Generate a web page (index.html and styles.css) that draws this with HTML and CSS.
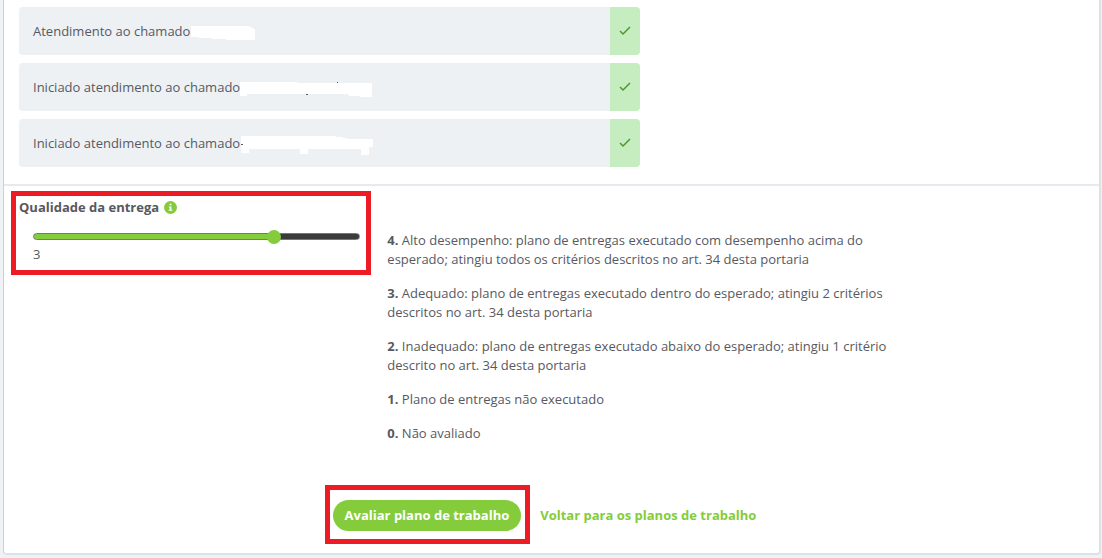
FILE: index.html
```html
<!DOCTYPE html>
<html lang="pt-BR">
<head>
<meta charset="utf-8">
<meta name="viewport" content="width=device-width, initial-scale=1">
<title>Avaliar plano de trabalho</title>
<link rel="stylesheet" href="styles.css">
</head>
<body>
<main class="card">
  <section class="tasks">
    <ul class="task-list">
      <li class="task">
        <div class="task-text"><span>Atendimento ao chamado</span>
          <svg class="mask" width="64" height="24" aria-hidden="true"><path d="M0 7H57L64 10V21H35V20H21V19H8V18H0z"/></svg>
        </div>
        <div class="task-status"><svg width="12" height="10" viewBox="0 0 12 10" aria-label="Concluído"><path d="M1 5L4 8L11 1"/></svg></div>
      </li>
      <li class="task">
        <div class="task-text task-text-flush"><span>Iniciado atendimento ao chamado</span>
          <svg class="mask" width="132" height="24" aria-hidden="true"><path d="M0 7H57V8H132V22H120V21H109V20H108V19H7V21H0z"/><path class="speck" d="M66 19h2v1h-2zM97 7h1v1h-1z"/></svg>
        </div>
        <div class="task-status"><svg width="12" height="10" viewBox="0 0 12 10" aria-label="Concluído"><path d="M1 5L4 8L11 1"/></svg></div>
      </li>
      <li class="task">
        <div class="task-text"><span>Iniciado atendimento ao chamado</span>
          <svg class="mask" width="132" height="24" aria-hidden="true"><path d="M0 5H95V6H102V7H106V8H132V16H128V24H120V18H67V23H59V18H8V22H0z"/><path class="speck" d="M0 13h2v1h-2z"/></svg>
        </div>
        <div class="task-status"><svg width="12" height="10" viewBox="0 0 12 10" aria-label="Concluído"><path d="M1 5L4 8L11 1"/></svg></div>
      </li>
    </ul>
  </section>
  <form class="review">
    <div class="review-grid">
      <div class="highlight quality">
        <div class="quality-head">
          <label for="quality">Qualidade da entrega</label>
          <svg width="13" height="13" viewBox="0 0 12 12" aria-hidden="true"><circle class="info-disc" cx="6" cy="6" r="6"/><path class="info-mark" d="M5.2 2.5h1.6V4H5.200zM4.500 5h2.300v3h.9v1H4.300V8h.9V6h-.7z"/></svg>
        </div>
        <input class="slider" id="quality" type="range" min="0" max="4" value="3">
        <output class="quality-value" for="quality">3</output>
      </div>
      <div class="legend">
        <p><b>4.</b> Alto desempenho: plano de entregas executado com desempenho acima do esperado; atingiu todos os critérios descritos no art. 34 desta portaria</p>
        <p><b>3.</b> Adequado: plano de entregas executado dentro do esperado; atingiu 2 critérios descritos no art. 34 desta portaria</p>
        <p><b>2.</b> Inadequado: plano de entregas executado abaixo do esperado; atingiu 1 critério descrito no art. 34 desta portaria</p>
        <p><b>1.</b> Plano de entregas não executado</p>
        <p><b>0.</b> Não avaliado</p>
      </div>
    </div>
    <div class="actions">
      <div class="highlight action-frame"><button class="submit" type="submit">Avaliar plano de trabalho</button></div>
      <a class="back" href="#">Voltar para os planos de trabalho</a>
    </div>
  </form>
</main>
</body>
</html>
```
FILE: styles.css
```css
* { box-sizing: border-box; }

body {
  margin: 0;
  padding: 0 1px 4px 3px;
  background: #eef2f5;
  color: #575962;
  font: 13px/19px "Open Sans", "Noto Sans", sans-serif;
}

.card {
  background: #fff;
  border: solid #dce3e8;
  border-width: 0 2px 2px 1px;
  border-left-color: #c9d2d8;
  border-radius: 0 0 4px 4px;
}

.tasks {
  padding: 7px 15px 17px;
  border-bottom: 2px solid #e6eaee;
}

.task-list {
  display: grid;
  gap: 8px;
  width: 58.33%;
  margin: 0;
  padding: 0;
  list-style: none;
}

.task {
  display: flex;
  min-height: 48px;
  border-radius: 4px;
  overflow: hidden;
  background: #edf1f4;
}

.task-text {
  display: flex;
  flex: 1;
  align-items: center;
  gap: 1px;
  padding: 0 14px;
}

.task-text-flush { gap: 0; }

.mask { fill: #fff; }

.speck { fill: #575962; }

.task-status {
  display: flex;
  align-items: center;
  justify-content: center;
  width: 30px;
  background: #c6edbf;
}

.task-status path {
  fill: none;
  stroke: #4a9b2b;
  stroke-width: 1.5;
}

.review { padding: 5px 7px 9px; }

.review-grid {
  display: grid;
  grid-template-columns: 1fr 2fr;
  align-items: start;
}

.highlight { border: 5px solid #ed1c24; }

.quality {
  display: flex;
  flex-direction: column;
  padding: 2px 6px 6px 3px;
}

.quality-head {
  display: flex;
  align-items: center;
  gap: 5px;
  font-weight: 700;
}

.info-disc { fill: #84cc3c; }

.info-mark { fill: #fff; }

.slider {
  appearance: none;
  height: 14px;
  margin: 12px 0 2px 14px;
  background: none;
}

.slider::-webkit-slider-runnable-track {
  height: 7px;
  border: 1px solid #777;
  border-radius: 4px;
  background: linear-gradient(to right, #84cc3c 75%, #3b3b3b 75%);
}

.slider::-webkit-slider-thumb {
  appearance: none;
  width: 14px;
  height: 14px;
  margin-top: -4px;
  border-radius: 50%;
  background: #84cc3c;
}

.quality-value { padding: 0 14px; }

.legend {
  max-width: 532px;
  padding: 40px 16px 0;
}

.legend p { margin: 0 0 15px; }

.actions {
  display: flex;
  align-items: center;
  justify-content: center;
  gap: 10px;
  padding: 27px 22px 0 0;
}

.action-frame { padding: 10px 4px 8px 3px; }

.submit {
  display: block;
  padding: 6px 12px;
  border: 0;
  border-radius: 16px;
  background: #84cc3c;
  color: #fff;
  font: inherit;
  font-weight: 700;
}

.back {
  padding-top: 2px;
  color: #84cc3c;
  font-weight: 700;
  text-decoration: none;
}
```
